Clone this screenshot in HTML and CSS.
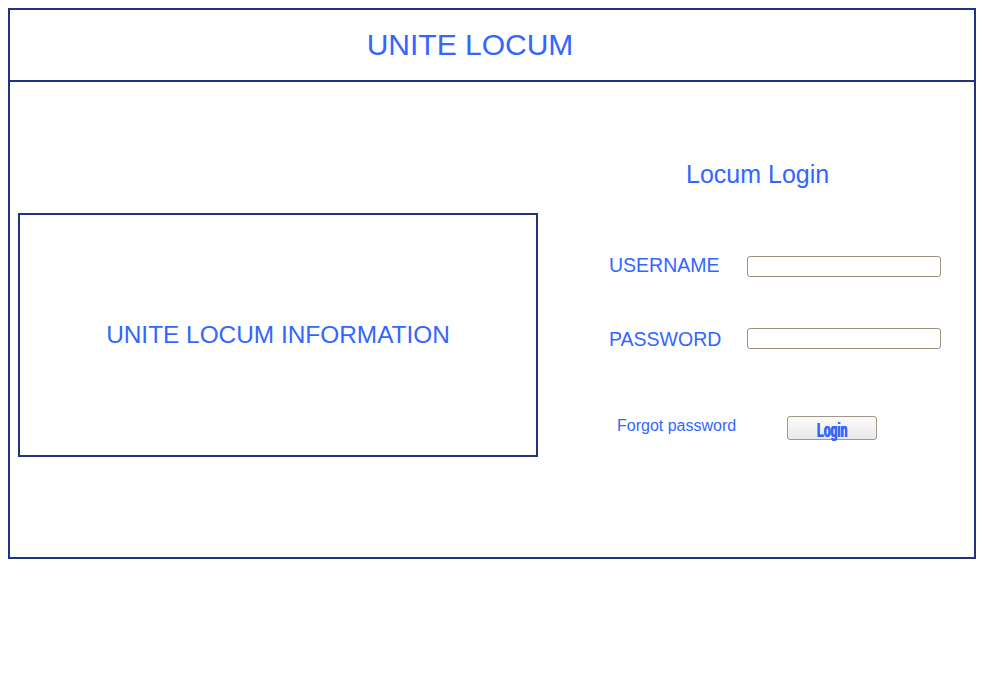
FILE: index.html
```html
<!DOCTYPE html>
<html lang="en">
<head>
<meta charset="utf-8">
<title>Unite Locum</title>
<link rel="stylesheet" href="styles.css">
</head>
<body>
<div class="frame">
  <header class="header">
    <h1 class="brand">UNITE LOCUM</h1>
  </header>
  <main class="main">
    <section class="info">
      <p class="info-text">UNITE LOCUM INFORMATION</p>
    </section>
    <section class="login">
      <h2 class="login-title">Locum Login</h2>
      <div class="row row-user">
        <label class="label" for="u">USERNAME</label>
        <input class="field" id="u" type="text">
      </div>
      <div class="row row-pass">
        <label class="label label-pass" for="p">PASSWORD</label>
        <input class="field" id="p" type="password">
      </div>
      <div class="actions">
        <a class="forgot" href="#">Forgot password</a>
        <button class="btn" type="button"><span class="btn-text">Login</span></button>
      </div>
    </section>
  </main>
</div>
</body>
</html>
```

FILE: styles.css
```css
html, body {
  margin: 0;
  padding: 0;
  background: #ffffff;
}

body {
  padding: 8px;
  font-family: "Liberation Sans", Arial, sans-serif;
  color: #3366ff;
}

.frame {
  box-sizing: border-box;
  width: 968px;
  height: 551px;
  border: 2px solid #1f3582;
}

.header {
  height: 70px;
  border-bottom: 2px solid #1f3582;
  display: flex;
  justify-content: center;
  padding-right: 44px;
}

.brand {
  margin: 0;
  margin-top: 20px;
  font-weight: normal;
  font-size: 30px;
  line-height: 30px;
  color: #3366ff;
}

.main {
  display: flex;
  align-items: flex-start;
}

.info {
  box-sizing: border-box;
  width: 520px;
  height: 244px;
  margin-top: 131px;
  margin-left: 8px;
  border: 2px solid #1f3582;
  display: flex;
  align-items: center;
  justify-content: center;
}

.info-text {
  margin: 0;
  font-size: 24.4px;
  line-height: 24px;
  margin-top: 0;
}

.login {
  margin-left: 71px;
  display: flex;
  flex-direction: column;
}

.login-title {
  margin: 80px 0 0 77px;
  font-weight: normal;
  font-size: 25px;
  line-height: 25px;
  color: #3366ff;
}

.row {
  display: flex;
  align-items: center;
  height: 21px;
}

.row-user {
  margin-top: 69px;
}

.row-pass {
  margin-top: 51px;
}

.label {
  width: 138px;
  font-size: 19.5px;
  line-height: 19px;
  margin-top: -2px;
}

.label-pass {
  margin-top: 2px;
}

.field {
  box-sizing: border-box;
  width: 194px;
  height: 21px;
  margin: 0;
  padding: 0 4px;
  border: 1px solid #9d927e;
  border-radius: 3px;
  background: #ffffff;
  font-family: "Liberation Sans", Arial, sans-serif;
  font-size: 13px;
}

.actions {
  display: flex;
  align-items: flex-start;
  margin-top: 67px;
  padding-left: 8px;
}

.forgot {
  width: 170px;
  margin-top: 2px;
  font-size: 16px;
  line-height: 16px;
  color: #3366ff;
  text-decoration: none;
}

.btn {
  box-sizing: border-box;
  width: 90px;
  height: 24px;
  margin: 0;
  padding: 0;
  border: 1px solid #a39885;
  border-radius: 3px;
  background: linear-gradient(#fbfbfb, #e9e9e9);
  display: flex;
  align-items: center;
  justify-content: center;
  cursor: pointer;
}

.btn-text {
  display: inline-block;
  font-family: "Liberation Sans", Arial, sans-serif;
  font-weight: bold;
  font-size: 20px;
  line-height: 20px;
  color: #3366ff;
  transform: scaleX(0.56);
  text-shadow: 0.6px 0 0 #3366ff, -0.6px 0 0 #3366ff;
  margin-top: 3px;
}
```
